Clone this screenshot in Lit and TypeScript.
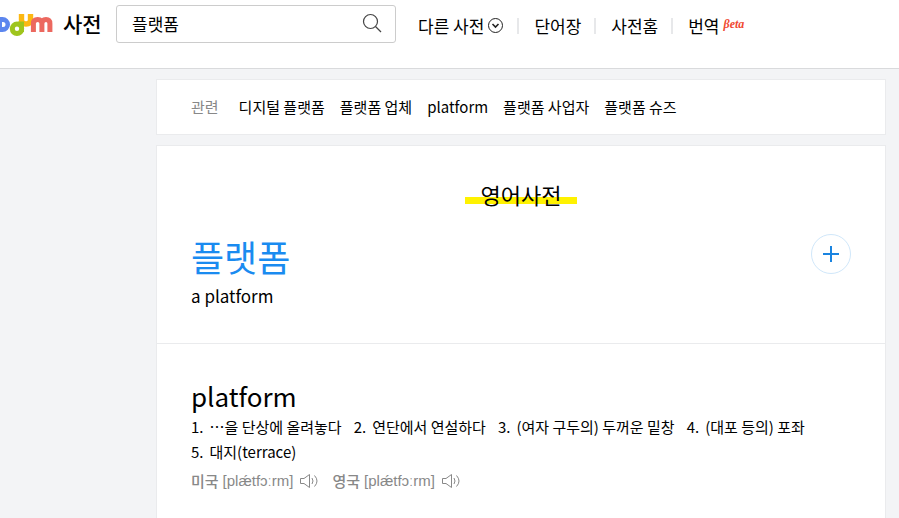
import { LitElement, html, css } from "lit";
import { customElement, property } from "lit/decorators.js";

@customElement("daum-logo")
class DaumLogo extends LitElement {
  static styles = css`
    :host { display: block; }
    svg { display: block; }
  `;
  render() {
    return html`<svg width="53" height="24" viewBox="0 0 53 24" role="img" aria-label="Daum">
      <path d="M-5 5H2.500A7.500 7.500 0 0 1 2.500 20H-5ZM2 10V15H3A2.500 2.500 0 0 0 3 10Z" fill="#5c86ee" fill-rule="evenodd" />
      <path d="M21.500 2V8Q21.500 12 26 12Q30.500 12 30.500 8V2" fill="none" stroke="#fcb813" stroke-width="5.400" />
      <path d="M18 9.500H24V20H20Z" fill="#9fc51d" />
      <circle cx="17" cy="16.800" r="4.700" fill="#fff" stroke="#9fc51d" stroke-width="5" />
      <path d="M33.400 20V11.500Q33.400 7.500 37.700 7.500Q41.900 7.500 41.900 11.500V20M41.900 11.500Q41.900 7.500 46 7.500Q49.900 7.500 49.900 11.500V20" fill="none" stroke="#ec685f" stroke-width="5" />
    </svg>`;
  }
}

@customElement("pron-item")
class PronItem extends LitElement {
  @property() region = "";
  @property() sound = "";
  static styles = css`
    :host { display: flex; align-items: center; color: #888; font-size: 15px; line-height: 24px; }
    .region { font-weight: 500; }
    .sound { font-family: "Liberation Sans", Arial, sans-serif; margin-left: 4px; }
    button { border: 0; padding: 0; margin-left: 6px; background: none; color: inherit; display: flex; cursor: pointer; }
  `;
  render() {
    return html`<span class="region">${this.region}</span><span class="sound">${this.sound}</span>
      <button aria-label="${this.region} 발음 듣기">
        <svg width="20" height="16" viewBox="0 0 20 16" fill="none" stroke="#888">
          <path d="M1.500 5.500H5L10.500 1.500V14.500L5 10.500H1.500Z" />
          <path d="M13 5Q15 8 13 11M15.500 2.500Q20.500 8 15.500 13.500" />
        </svg>
      </button>`;
  }
}

@customElement("app-root")
class AppRoot extends LitElement {
  private related = ["디지털 플랫폼", "플랫폼 업체", "platform", "플랫폼 사업자", "플랫폼 슈즈"];
  private meanings = ["…을 단상에 올려놓다", "연단에서 연설하다", "(여자 구두의) 두꺼운 밑창", "(대포 등의) 포좌", "대지(terrace)"];

  static styles = css`
    :host {
      display: flex;
      flex-direction: column;
      min-height: 100vh;
      background: #f3f4f6;
      color: #000;
      font-family: "Noto Sans CJK KR", sans-serif;
    }
    * { box-sizing: border-box; }
    a { color: inherit; text-decoration: none; }
    h1, h2, h3, p, ul, ol { margin: 0; padding: 0; font-weight: 400; list-style: none; }
    button { font: inherit; padding: 0; cursor: pointer; }

    header { display: flex; align-items: flex-start; height: 69px; padding-top: 5px; background: #fff; border-bottom: 1px solid #d9dadc; }
    .brand { display: flex; align-items: center; height: 38px; width: 116px; gap: 10px; }
    .service { font-size: 21px; line-height: 36px; height: 38px; font-weight: 500; }
    .search { display: flex; align-items: center; width: 280px; height: 38px; border: 1px solid #ccc; border-radius: 3px; }
    .search input { flex: 1; min-width: 0; height: 36px; border: 0; padding: 0 0 2px 15px; outline: 0; background: none; font: inherit; font-size: 17px; color: #000; }
    .search button { display: flex; margin-right: 12px; border: 0; background: none; }
    nav ul { display: flex; align-items: center; margin-left: 22px; height: 42px; font-size: 17px; line-height: 24px; }
    nav li { display: flex; align-items: center; }
    nav li + li::before { content: ""; width: 2px; height: 16px; margin: 0 15px 0 13px; background: #e7e8ea; }
    nav a { display: flex; align-items: center; }
    .more { margin-left: 4px; }
    .beta { align-self: flex-start; margin-left: 4px; color: #f04a32; font: italic bold 12px/20px "Liberation Serif", serif; }

    main { flex: 1; display: flex; flex-direction: column; margin: 10px 13px 0 156px; }
    .card { background: #fff; border: 1px solid #eaebed; }
    .related { display: flex; align-items: center; height: 56px; padding-left: 34px; font-size: 15px; line-height: 24px; }
    .related h2 { color: #888; font-size: 15px; margin-right: 20px; }
    .related ul { display: flex; gap: 15px; }
    .dictionary { flex: 1; margin-top: 10px; border-bottom: 0; }
    .entry { padding: 33px 34px; border-bottom: 1px solid #eaebed; }
    .title { width: fit-content; margin: 0 auto; padding: 0 16px; font-size: 22px; line-height: 30px; background: linear-gradient(#fff200, #fff200) 0 18px / 100% 7px no-repeat; }
    .word { display: flex; justify-content: space-between; align-items: center; margin-top: 23px; }
    .word h1 { font-size: 36px; line-height: 48px; color: #1a8bf0; }
    .add { display: flex; align-items: center; justify-content: center; width: 40px; height: 40px; margin-bottom: 4px; border: 1px solid #d0e7fa; border-radius: 50%; background: #fff; }
    .gloss { margin-top: 4px; padding-bottom: 2px; font-size: 17px; line-height: 24px; }
    .result { padding: 36px 34px 20px; }
    .result h3 { font-size: 26px; line-height: 32px; padding-bottom: 2px; }
    .meanings { display: flex; flex-wrap: wrap; column-gap: 12px; font-size: 15px; line-height: 25px; }
    .meanings li { display: flex; gap: 6px; }
    .prons { display: flex; gap: 13px; margin-top: 5px; }
  `;

  render() {
    return html`
      <header>
        <div class="brand"><daum-logo></daum-logo><a class="service" href="#">사전</a></div>
        <form class="search" role="search">
          <input type="text" aria-label="검색어" .value=${"플랫폼"} />
          <button type="button" aria-label="검색">
            <svg width="22" height="22" viewBox="0 0 22 22" fill="none" stroke="#444" stroke-width="1.200">
              <circle cx="9.500" cy="8.500" r="7" /><path d="M14.500 13.500L20 19" />
            </svg>
          </button>
        </form>
        <nav><ul>
          <li><a href="#">다른 사전
            <svg class="more" width="16" height="16" viewBox="0 0 16 16" fill="none" stroke="#222">
              <circle cx="7.500" cy="7.500" r="7" /><path d="M4.500 6L7.500 9L10.500 6" stroke-width="1.600" />
            </svg></a></li>
          <li><a href="#">단어장</a></li>
          <li><a href="#">사전홈</a></li>
          <li><a href="#">번역<span class="beta">βeta</span></a></li>
        </ul></nav>
      </header>
      <main>
        <section class="card related">
          <h2>관련</h2>
          <ul>${this.related.map((t) => html`<li><a href="#">${t}</a></li>`)}</ul>
        </section>
        <section class="card dictionary">
          <div class="entry">
            <h2 class="title">영어사전</h2>
            <div class="word">
              <h1><a href="#">플랫폼</a></h1>
              <button class="add" aria-label="단어장에 추가">
                <svg width="16" height="16" viewBox="0 0 16 16" stroke="#1a84e0" stroke-width="2"><path d="M8 0V16M0 8H16" /></svg>
              </button>
            </div>
            <p class="gloss">a platform</p>
          </div>
          <div class="result">
            <h3><a href="#">platform</a></h3>
            <ol class="meanings">${this.meanings.map((t, i) => html`<li><span>${i + 1}.</span><span>${t}</span></li>`)}</ol>
            <div class="prons">
              <pron-item region="미국" sound="[plǽtfɔːrm]"></pron-item>
              <pron-item region="영국" sound="[plǽtfɔːrm]"></pron-item>
            </div>
          </div>
        </section>
      </main>
    `;
  }
}
